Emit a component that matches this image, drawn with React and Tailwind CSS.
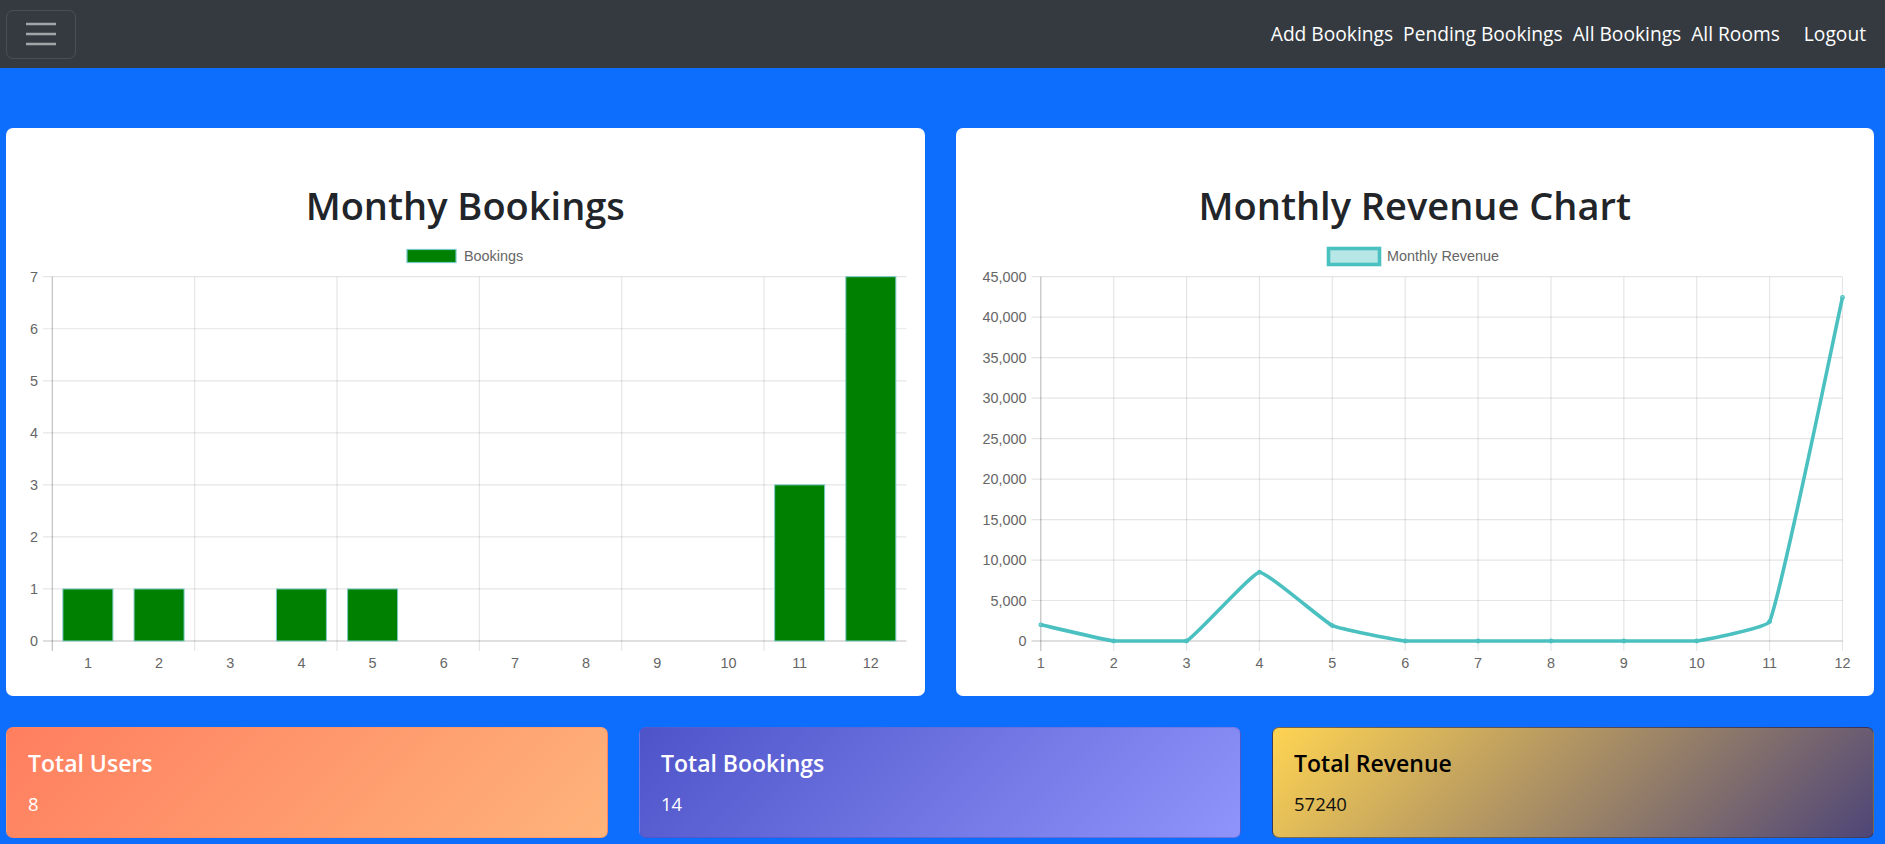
import React from 'react';

const bookings = [1, 1, 0, 1, 1, 0, 0, 0, 0, 0, 3, 7];
const revenue = [2000, 0, 0, 8500, 1900, 0, 0, 0, 0, 0, 2400, 42440];
const months = [1, 2, 3, 4, 5, 6, 7, 8, 9, 10, 11, 12];

const chartFont = "'Liberation Sans', Arial, Helvetica, sans-serif";
const grid = 'rgba(0,0,0,0.1)';
const zero = 'rgba(0,0,0,0.25)';

// chart.js style spline, control points kept inside the chart area
function splinePath(pts, tension, top, bottom) {
  const clamp = (v) => Math.min(Math.max(v, top), bottom);
  const cps = pts.map((p, i) => {
    const prev = pts[i - 1] || p;
    const next = pts[i + 1] || p;
    const d01 = Math.hypot(p.x - prev.x, p.y - prev.y);
    const d12 = Math.hypot(next.x - p.x, next.y - p.y);
    let s01 = d01 / (d01 + d12);
    let s12 = d12 / (d01 + d12);
    if (isNaN(s01)) s01 = 0;
    if (isNaN(s12)) s12 = 0;
    const fa = tension * s01;
    const fb = tension * s12;
    return {
      px: p.x - fa * (next.x - prev.x),
      py: clamp(p.y - fa * (next.y - prev.y)),
      nx: p.x + fb * (next.x - prev.x),
      ny: clamp(p.y + fb * (next.y - prev.y)),
    };
  });
  let d = `M${pts[0].x},${pts[0].y}`;
  for (let i = 1; i < pts.length; i++) {
    d += ` C${cps[i - 1].nx},${cps[i - 1].ny} ${cps[i].px},${cps[i].py} ${pts[i].x},${pts[i].y}`;
  }
  return d;
}

function BookingsChart() {
  const left = 46.3;
  const right = 900.4;
  const top = 48.7;
  const base = 413;
  const step = (right - left) / 12;
  const unit = (base - top) / 7;

  return (
    <svg width="918" height="468" fontFamily={chartFont} fontSize="14.4">
      {/* legend */}
      <rect x="401" y="21.5" width="49" height="13" fill="#008000" stroke="#75c9c9" strokeWidth="1.2" />
      <text x="458" y="33" fill="#666">Bookings</text>

      {[0, 1, 2, 3, 4, 5, 6, 7].map((v) => {
        const y = base - v * unit;
        return (
          <g key={v}>
            <line x1="37" x2={right} y1={y} y2={y} stroke={v === 0 ? zero : grid} strokeWidth="1.2" />
            <text x="32" y={y + 5} textAnchor="end" fill="#666">{v}</text>
          </g>
        );
      })}
      {[0, 1, 2, 3, 4, 5].map((k) => {
        const x = left + k * step * 2;
        return (
          <line key={k} x1={x} x2={x} y1={top} y2={base + 10} stroke={k === 0 ? zero : grid} strokeWidth="1.2" />
        );
      })}
      {bookings.map((v, i) => {
        const cx = left + step * (i + 0.5);
        const h = v * unit;
        return (
          <g key={i}>
            {v > 0 && (
              <rect x={cx - 25} y={base - h} width="50" height={h} fill="#008000" stroke="#7fcaca" strokeWidth="1" />
            )}
            <text x={cx} y={440} textAnchor="middle" fill="#666">{months[i]}</text>
          </g>
        );
      })}
    </svg>
  );
}

function RevenueChart() {
  const left = 84.8;
  const right = 886.5;
  const top = 48.7;
  const base = 413;
  const step = (right - left) / 11;
  const per = (base - top) / 9;
  const pts = revenue.map((v, i) => ({x: left + i * step, y: base - (v / 5000) * per}));

  return (
    <svg width="918" height="468" fontFamily={chartFont} fontSize="14.4">
      {/* legend */}
      <rect x="372.5" y="20.5" width="51" height="16" fill="rgba(75,192,192,0.4)" stroke="#4bc0c0" strokeWidth="3.6" />
      <text x="431" y="33" fill="#666">Monthly Revenue</text>

      {[0, 1, 2, 3, 4, 5, 6, 7, 8, 9].map((k) => {
        const y = base - k * per;
        return (
          <g key={k}>
            <line x1="75.5" x2={right} y1={y} y2={y} stroke={k === 0 ? zero : grid} strokeWidth="1.2" />
            <text x="70.5" y={y + 5} textAnchor="end" fill="#666">
              {(k * 5000).toLocaleString('en-US')}
            </text>
          </g>
        );
      })}
      {months.map((m, i) => {
        const x = left + i * step;
        return (
          <g key={m}>
            <line x1={x} x2={x} y1={top} y2={base + 10} stroke={i === 0 ? zero : grid} strokeWidth="1.2" />
            <text x={x} y={440} textAnchor="middle" fill="#666">{m}</text>
          </g>
        );
      })}
      <path d={splinePath(pts, 0.1, top, base)} fill="none" stroke="#4bc0c0" strokeWidth="3.6" strokeLinejoin="round" />
      {pts.map((p, i) => (
        <circle key={i} cx={p.x} cy={p.y} r="1.8" fill="rgba(75,192,192,0.4)" stroke="#4bc0c0" strokeWidth="1.2" />
      ))}
    </svg>
  );
}

function ChartCard({title, children}) {
  return (
    <div className="flex h-[568px] flex-1 flex-col overflow-hidden rounded-[7px] bg-white">
      <h2 className="pt-[54px] text-center text-[38px] font-semibold leading-[46px] text-[#212529]">
        {title}
      </h2>
      {children}
    </div>
  );
}

function StatCard({title, value, className, dark}) {
  return (
    <div className={`h-[111px] rounded-[7px] px-[21px] pt-[21px] ${className}`}>
      <h5 className={`text-[23px] font-semibold leading-[28.8px] ${dark ? 'text-black' : 'text-white'}`}>
        {title}
      </h5>
      <p className={`mt-[12px] text-[18.5px] leading-[28.8px] ${dark ? 'text-[#111]' : 'text-white'}`}>
        {value}
      </p>
    </div>
  );
}

export default function App() {
  return (
    <div className="min-h-[844px] bg-[#0d6efd] font-['Segoe_UI','Open_Sans',sans-serif]">
      <nav className="flex h-[68px] items-center justify-between bg-[#343a40] pl-[6px] pr-[19px]">
        <button
          type="button"
          aria-label="Toggle navigation"
          className="flex h-[49px] w-[70px] items-center justify-center rounded-[7px] border border-white/10"
        >
          <svg width="30" height="24" viewBox="0 0 30 24">
            <path d="M0 2h30M0 12h30M0 22h30" stroke="rgba(255,255,255,0.55)" strokeWidth="2.4" />
          </svg>
        </button>
        <div className="flex items-center gap-[10px] text-[19.2px] text-white">
          <a>Add Bookings</a>
          <a>Pending Bookings</a>
          <a>All Bookings</a>
          <a>All Rooms</a>
          <a className="ml-[14px]">Logout</a>
        </div>
      </nav>

      <div className="flex gap-[31px] pl-[6px] pr-[11px] pt-[60px]">
        <ChartCard title="Monthy Bookings">
          <BookingsChart />
        </ChartCard>
        <ChartCard title="Monthly Revenue Chart">
          <RevenueChart />
        </ChartCard>
      </div>

      <div className="grid grid-cols-3 gap-[31px] pl-[6px] pr-[11px] pt-[31px]">
        <StatCard
          title="Total Users"
          value="8"
          className="border border-[#f4845f]/40 bg-linear-[135deg,#ff7e5f,#feb47b]"
        />
        <StatCard
          title="Total Bookings"
          value="14"
          className="border border-[#4e54c8]/40 bg-linear-[135deg,#4e54c8,#8f94fb]"
        />
        <StatCard
          title="Total Revenue"
          value="57240"
          dark
          className="border border-[#2b2a4a]/60 bg-linear-[135deg,#ffd452,#4e4577]"
        />
      </div>
    </div>
  );
}
